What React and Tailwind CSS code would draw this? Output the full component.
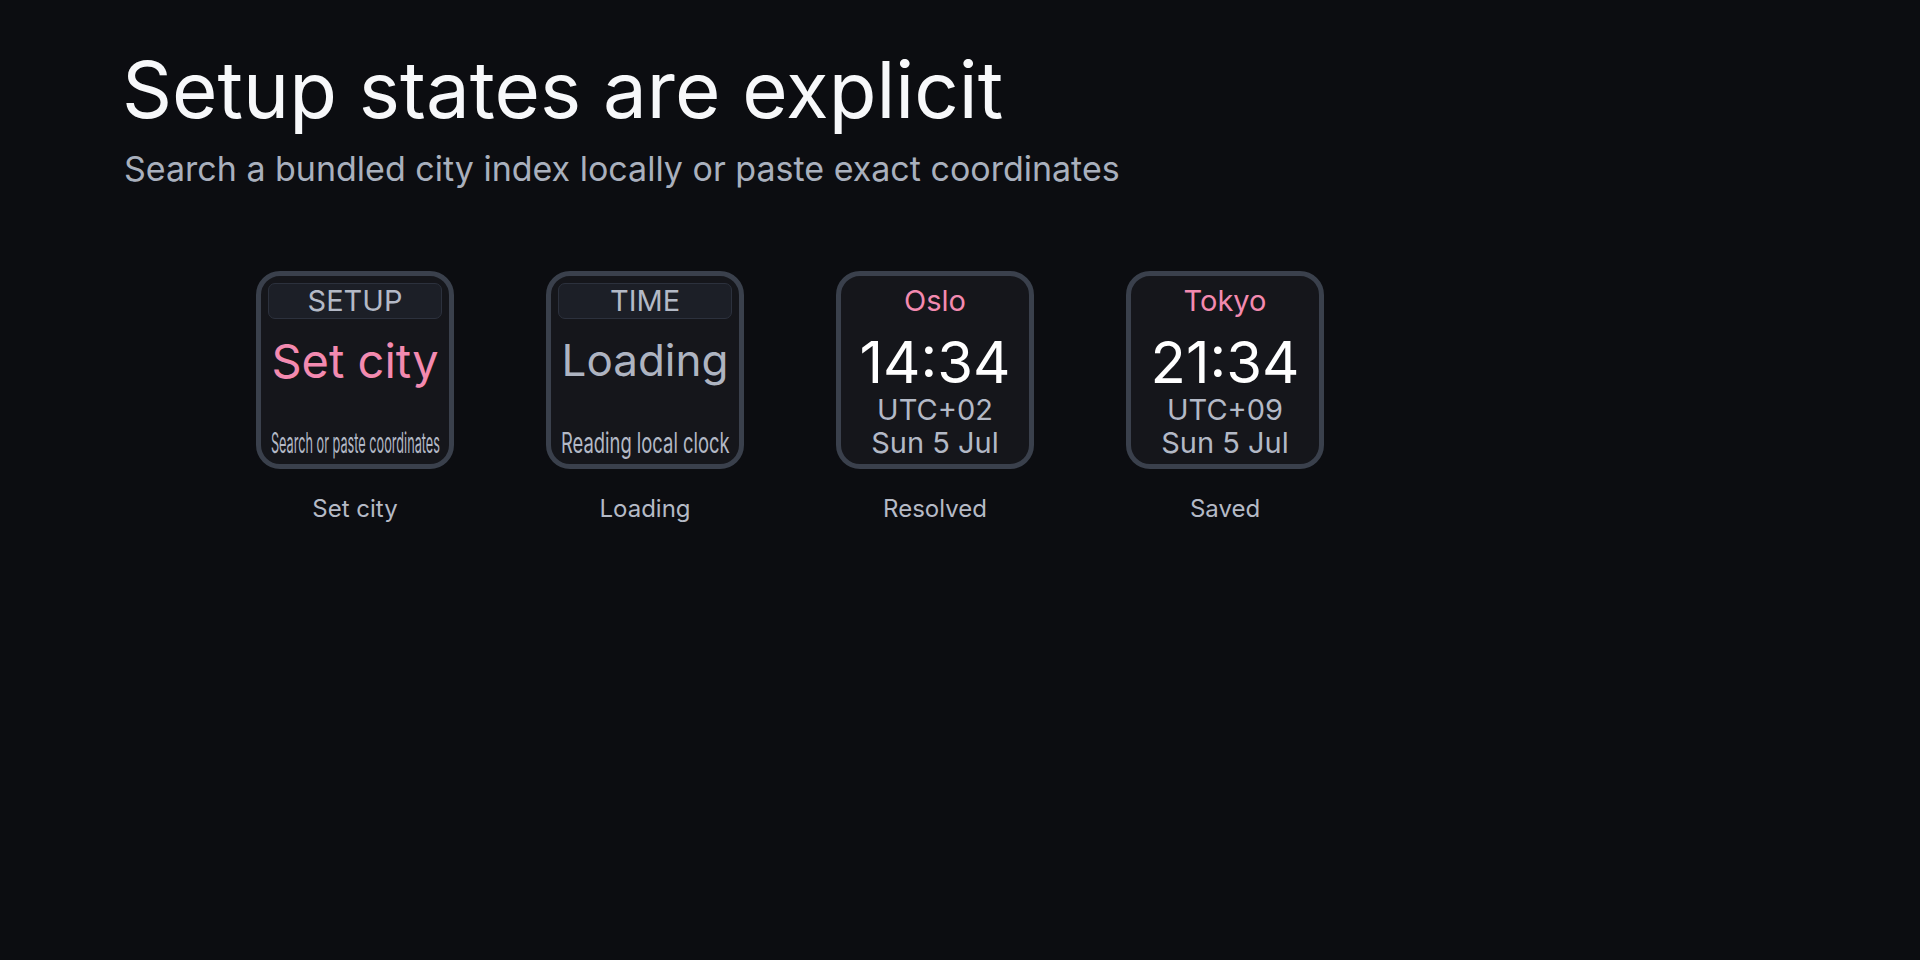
import React, { useLayoutEffect, useRef, useState } from 'react';

// squeezes a line of text so it fills the given width, like an svg textLength
function FitText({ children, width, className }) {
  const ref = useRef(null);
  const [scale, setScale] = useState(1);

  useLayoutEffect(() => {
    if (!ref.current) return;
    const w = ref.current.scrollWidth;
    if (w > 0) setScale(width / w);
  }, [width, children]);

  return (
    <div className="flex justify-center overflow-visible" style={{ width }}>
      <span
        ref={ref}
        className={`inline-block whitespace-nowrap origin-center ${className}`}
        style={{ transform: `scaleX(${scale})` }}
      >
        {children}
      </span>
    </div>
  );
}

function Watch({ children }) {
  return (
    <div className="w-[198px] h-[198px] rounded-[24px] border-[5px] border-[#3a404c] bg-[#15161b] flex flex-col items-center px-[7px] pt-[7px]">
      {children}
    </div>
  );
}

function SetupFace({ tag, title, titleClass, hint }) {
  return (
    <Watch>
      <div className="w-full h-[36px] rounded-[7px] border border-[#2c313d] bg-[#1c1f27] flex items-center justify-center text-[29px] leading-[36px] text-[#b3b9c6]">
        {tag}
      </div>
      <div className={`mt-[18px] h-[47px] flex items-center ${titleClass}`}>{title}</div>
      <div className="mt-[45px]">
        <FitText width={169} className="text-[28px] leading-[28px] text-[#b3b9c6]">
          {hint}
        </FitText>
      </div>
    </Watch>
  );
}

function TimeFace({ city, time, offset, date }) {
  return (
    <Watch>
      <div className="h-[36px] flex items-center text-[29px] leading-[36px] text-[#f38ab0]">{city}</div>
      <div className="mt-[15px] text-[58px] leading-[56px] text-white">{time}</div>
      <div className="mt-[6px] text-[29px] leading-[28px] text-[#b3b9c6]">{offset}</div>
      <div className="mt-[5px] text-[29px] leading-[28px] text-[#b3b9c6]">{date}</div>
    </Watch>
  );
}

const states = [
  {
    label: 'Set city',
    face: <SetupFace tag="SETUP" title="Set city" titleClass="text-[47px] leading-[47px] text-[#f38ab0]" hint="Search or paste coordinates" />,
  },
  {
    label: 'Loading',
    face: <SetupFace tag="TIME" title="Loading" titleClass="text-[44px] leading-[47px] text-[#aeb4c1]" hint="Reading local clock" />,
  },
  { label: 'Resolved', face: <TimeFace city="Oslo" time="14:34" offset="UTC+02" date="Sun 5 Jul" /> },
  { label: 'Saved', face: <TimeFace city="Tokyo" time="21:34" offset="UTC+09" date="Sun 5 Jul" /> },
];

export default function App() {
  return (
    <div
      className="w-[1920px] h-[960px] bg-[#0c0d11] overflow-hidden"
      style={{ fontFamily: 'Inter, "Noto Sans", sans-serif' }}
    >
      <div className="pl-[122px] pt-[51px]">
        <h1 className="text-[78px] leading-[78px] text-[#f7f8fa] font-normal">Setup states are explicit</h1>
        <p className="mt-[23px] pl-[2px] text-[34px] leading-[34px] text-[#a9b0bd]">
          Search a bundled city index locally or paste exact coordinates
        </p>
      </div>

      {/* watch face previews */}
      <div className="flex gap-[92px] pl-[256px] mt-[85px]">
        {states.map((s) => (
          <div key={s.label} className="flex flex-col items-center">
            {s.face}
            <div className="mt-[28px] text-[24px] leading-[24px] text-[#b5bac6]">{s.label}</div>
          </div>
        ))}
      </div>
    </div>
  );
}
